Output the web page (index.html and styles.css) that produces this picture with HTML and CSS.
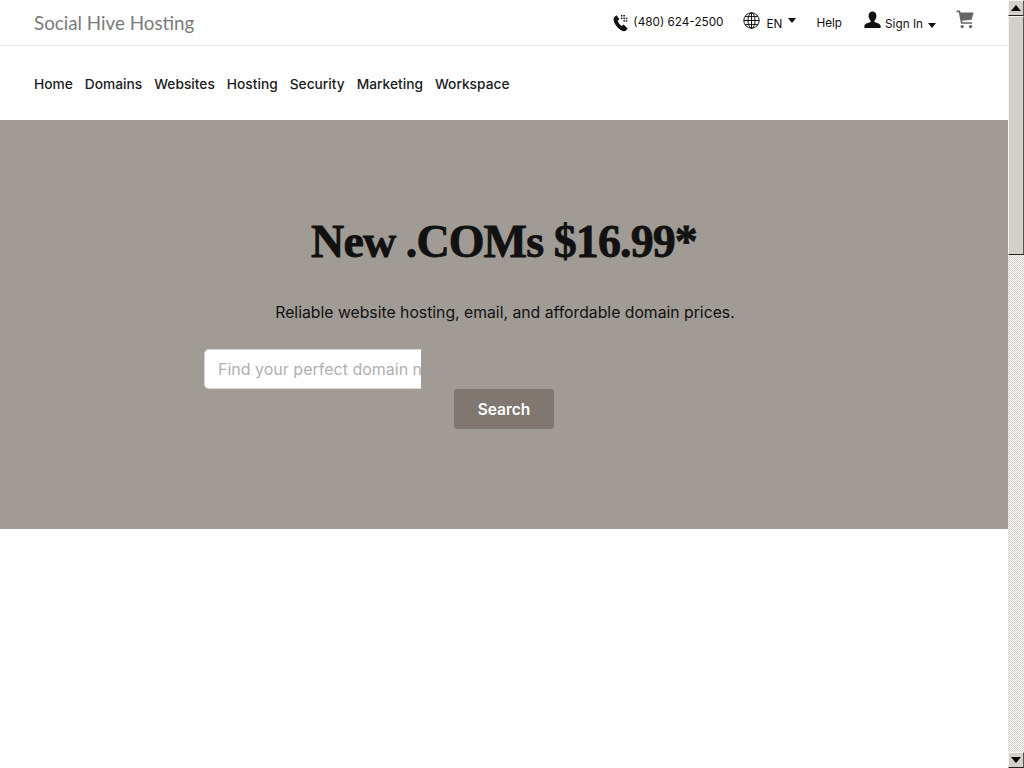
FILE: index.html

```html
<!DOCTYPE html>
<html lang="en">
<head>
  <meta charset="UTF-8">
  <title>Social Hive Hosting</title>
  <link rel="stylesheet" href="styles.css">
</head>
<body>
  <div class="page">
    <div class="main">
      <div class="topbar">
        <a class="brand">Social Hive Hosting</a>
        <div class="utils">
          <a class="util phone">
            <svg width="17" height="18" viewBox="0 0 17 18"><path d="M1 3.2 3.6 1.2 6.4 5.2 4.8 6.8C5.2 8.6 7 11 8.8 12L10.6 10.6 14.6 14.4 13 16.6C12 17.6 10 17.4 8 16.2 4 13.8 1 9.4 .6 5.6.5 4.6.6 3.8 1 3.2Z" fill="#111"/><g fill="#111"><rect x="8" y="1" width="1.5" height="1.5"/><rect x="10.4" y="1" width="1.5" height="1.5"/><rect x="8" y="3.6" width="1.5" height="1.5"/><rect x="10.4" y="3.6" width="1.5" height="1.5"/><rect x="12.8" y="3.6" width="1.5" height="1.5"/><rect x="10.4" y="6.2" width="1.5" height="1.5"/><rect x="12.8" y="6.2" width="1.5" height="1.5"/></g></svg>
            <span class="phone-text">(480) 624-2500</span>
          </a>
          <a class="util lang">
            <svg class="globe" width="17" height="17" viewBox="0 0 17 17" fill="none" stroke="#111" stroke-width="1"><circle cx="8.5" cy="8.5" r="7.7"/><ellipse cx="8.5" cy="8.5" rx="3.5" ry="7.7"/><path d="M8.5 .8V16.2M.8 8.5H16.2M2 4.6H15M2 12.4H15"/></svg>
            <span class="lang-text">EN</span>
            <i class="caret caret-up"></i>
          </a>
          <a class="util help">Help</a>
          <a class="util signin">
            <svg class="person" width="17" height="18" viewBox="0 0 17 18"><path d="M8.5 .5C11 .5 12.4 2.4 12.4 4.8 12.4 7 11.4 8.8 10.4 9.8V11C11.8 11.8 16.6 12.4 16.6 15V17H.4V15C.4 12.4 5.2 11.8 6.6 11V9.8C5.6 8.8 4.6 7 4.6 4.8 4.6 2.4 6 .5 8.5 .5Z" fill="#111"/></svg>
            <span class="signin-text">Sign In</span>
            <i class="caret caret-low"></i>
          </a>
          <a class="util cart">
            <svg width="18" height="19" viewBox="0 0 18 19"><path d="M.5 .6H3.8L4.6 2.6H17.6L15.6 9.8 6 10.8 6.4 12.2H16V13.8H5L2.8 2.2H.5Z" fill="#666"/><circle cx="6.2" cy="16.6" r="1.7" fill="#666"/><circle cx="14.6" cy="16.6" r="1.7" fill="#666"/></svg>
          </a>
        </div>
      </div>

      <nav class="nav">
        <a>Home</a>
        <a>Domains</a>
        <a>Websites</a>
        <a>Hosting</a>
        <a>Security</a>
        <a>Marketing</a>
        <a>Workspace</a>
      </nav>

      <section class="hero">
        <h1>New .COMs $16.99*</h1>
        <p>Reliable website hosting, email, and affordable domain prices.</p>
        <form class="search">
          <input type="text" placeholder="Find your perfect domain name">
          <button type="button">Search</button>
        </form>
      </section>
    </div>

    <div class="scrollbar">
      <div class="sb-btn"><i class="sb-arrow sb-up"></i></div>
      <div class="sb-thumb"></div>
      <div class="sb-track"></div>
      <div class="sb-btn"><i class="sb-arrow sb-down"></i></div>
    </div>
  </div>
</body>
</html>
```

FILE: styles.css

```css
html, body {
  margin: 0;
  height: 100%;
  overflow: hidden;
  background: #fff;
}
.page {
  display: flex;
  height: 768px;
  font-family: Inter, "Liberation Sans", sans-serif;
  color: #111;
}
.main {
  flex: 1;
  min-width: 0;
}
.topbar {
  height: 45px;
  display: flex;
  justify-content: space-between;
  align-items: flex-start;
  padding: 0 34px;
  border-bottom: 1px solid #e8e8e8;
}
.brand {
  font-family: Lato, sans-serif;
  font-size: 18.8px;
  color: #7a7a7a;
  line-height: 46px;
}
.utils {
  display: flex;
  align-items: flex-start;
  font-size: 11.75px;
  line-height: 14px;
}
.util {
  display: flex;
  align-items: flex-start;
}
.phone {
  margin-top: 14px;
  gap: 3px;
}
.phone-text {
  margin-top: 1px;
}
.lang {
  margin-left: 19px;
  margin-top: 12px;
}
.lang-text {
  margin: 5px 6px 0 7px;
}
.caret-up {
  margin-top: 6px;
}
.help {
  margin-left: 20px;
  margin-top: 16px;
}
.signin {
  margin-left: 22px;
  margin-top: 11px;
}
.signin-text {
  margin: 6px 5px 0 4px;
}
.cart {
  margin-left: 20px;
  margin-top: 10px;
}
.caret {
  width: 0;
  height: 0;
  border-left: 4px solid transparent;
  border-right: 4px solid transparent;
  border-top: 5px solid #111;
}
.caret-low {
  margin-top: 12px;
}
.nav {
  box-sizing: border-box;
  height: 74px;
  display: flex;
  align-items: center;
  gap: 12px;
  padding: 2px 0 0 34px;
  font-size: 13.75px;
  font-weight: 500;
  color: #1b1b1b;
}
.hero {
  height: 409px;
  background: #a09b94;
  display: flex;
  flex-direction: column;
  align-items: center;
}
.hero h1 {
  margin: 93px 0 0;
  font-family: "Liberation Serif", serif;
  font-size: 46px;
  line-height: 58px;
  font-weight: 700;
  letter-spacing: -0.9px;
  color: #111;
  -webkit-text-stroke: 0.8px #111;
}
.hero p {
  margin: 32px 0 0 2px;
  font-size: 15.75px;
  line-height: 20px;
  color: #111;
}
.search {
  width: 600px;
  margin-top: 26px;
  display: flex;
  flex-direction: column;
}
.search input {
  box-sizing: border-box;
  align-self: flex-start;
  width: 217px;
  height: 40px;
  padding: 0 0 0 13px;
  font-family: inherit;
  font-size: 16px;
  border: 1px solid #d4d4d4;
  border-right: none;
  border-radius: 5px 0 0 5px;
  background: #fff;
}
.search input::placeholder {
  color: #b0b0b0;
  opacity: 1;
}
.search button {
  align-self: center;
  width: 100px;
  height: 40px;
  font-family: inherit;
  font-size: 15.5px;
  font-weight: 600;
  color: #fff;
  background: #7f7770;
  border: none;
  border-radius: 3px;
}
.scrollbar {
  width: 16px;
  height: 768px;
  display: flex;
  flex-direction: column;
  flex: none;
}
.sb-btn {
  height: 16px;
  flex: none;
  display: flex;
  align-items: center;
  justify-content: center;
  box-sizing: border-box;
  background: #d4d0c8;
  border: 1px solid;
  border-color: #f4f2ee #555 #222 #f4f2ee;
}
.sb-arrow {
  width: 0;
  height: 0;
  border-left: 5px solid transparent;
  border-right: 5px solid transparent;
}
.sb-up {
  border-bottom: 6px solid #000;
}
.sb-down {
  border-top: 6px solid #000;
}
.sb-thumb {
  height: 239px;
  flex: none;
  box-sizing: border-box;
  background: #d4d0c8;
  border: 1px solid;
  border-color: #f4f2ee #555 #222 #f4f2ee;
}
.sb-track {
  flex: 1;
  background: repeating-conic-gradient(#d4d0c8 0 25%, #fff 0 50%) 0 0 / 2px 2px;
}
```
